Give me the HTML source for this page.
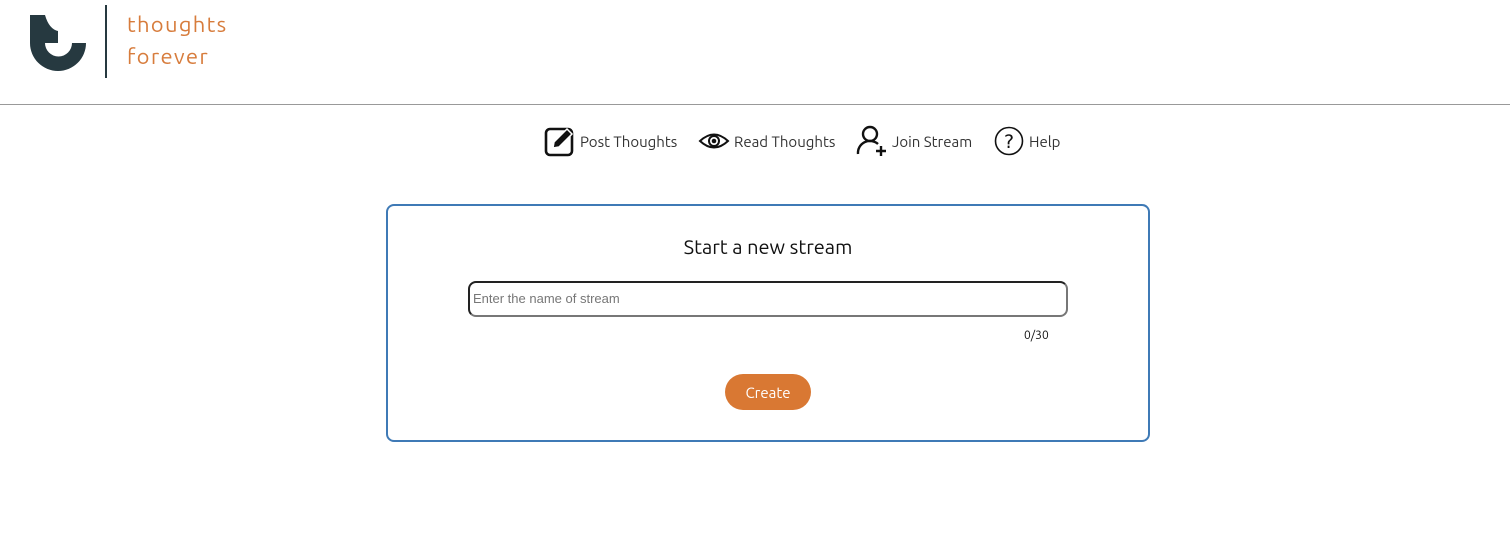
<!DOCTYPE html>
<html><head><style>
body{margin:0;width:1510px;height:545px;background:#fff;position:relative;font-family:"Ubuntu","DejaVu Sans","Liberation Sans",sans-serif;overflow:hidden}
.abs{position:absolute}
.nav{top:124px;height:34px;display:flex;align-items:center;font-size:15px;color:#333}
.nav span{margin-left:4px}
</style></head><body>
<svg class="abs" style="left:0;top:0" width="100" height="80" viewBox="0 0 100 80">
<path d="M30 15 H45 Q49 29 58 31 V43 H45 A13.5 13.5 0 0 0 72 43 H86 A28 28 0 0 1 30 43 Z" fill="#263940"/>
</svg>
<div class="abs" style="left:105px;top:5px;width:2px;height:73px;background:#263940"></div>
<div class="abs" style="left:127px;top:9px;font-family:'Ubuntu','DejaVu Sans',sans-serif;font-weight:400;font-size:22px;line-height:32px;color:#d77c3c;letter-spacing:1.3px">thoughts<br>forever</div>
<div class="abs" style="left:0;top:104px;width:1510px;height:1px;background:#999"></div>
<div class="abs nav" style="left:544px">
<svg width="32" height="32" viewBox="0 0 32 32"><rect x="2" y="4" width="26" height="26" rx="4" fill="none" stroke="#111" stroke-width="2.6"/><path d="M9 23 L10 17 L23 4 L28 9 L15 22 Z" fill="#111" stroke="#fff" stroke-width="1.5"/></svg>
<span>Post Thoughts</span></div>
<div class="abs nav" style="left:698px">
<svg width="32" height="32" viewBox="0 0 32 32"><path d="M2 16 Q16 3 30 16 Q16 29 2 16 Z" fill="none" stroke="#111" stroke-width="2"/><circle cx="16" cy="16" r="5" fill="none" stroke="#111" stroke-width="2"/><circle cx="16" cy="16" r="2.3" fill="#111"/></svg>
<span>Read Thoughts</span></div>
<div class="abs nav" style="left:856px">
<svg width="32" height="34" viewBox="0 0 32 34"><circle cx="14" cy="10" r="7" fill="none" stroke="#111" stroke-width="2.4"/><path d="M2 30 A12 12 0 0 1 22 20" fill="none" stroke="#111" stroke-width="2.4"/><path d="M25 22 V32 M20 27 H30" stroke="#111" stroke-width="2.4"/></svg>
<span>Join Stream</span></div>
<div class="abs nav" style="left:993px">
<svg width="32" height="32" viewBox="0 0 32 32"><circle cx="16" cy="16" r="13.5" fill="none" stroke="#111" stroke-width="1.6"/><text x="16" y="23" text-anchor="middle" font-size="19" font-family="DejaVu Sans" fill="#111">?</text></svg>
<span>Help</span></div>
<div class="abs" style="left:386px;top:204px;width:760px;height:234px;border:2px solid #3f7ab6;border-radius:8px"></div>
<div class="abs" style="left:386px;top:235px;width:764px;text-align:center;font-size:20px;color:#111">Start a new stream</div>
<div class="abs" style="left:468px;top:281px;width:596px;height:32px;border:2px solid;border-color:#222 #777 #777 #222;border-radius:8px;font-family:'Liberation Sans',sans-serif;font-size:13px;color:#777;line-height:32px;text-indent:3px">Enter the name of stream</div>
<div class="abs" style="left:1024px;top:329px;font-size:12px;color:#111">0/30</div>
<div class="abs" style="left:725px;top:374px;width:86px;height:36px;border-radius:18px;background:#d97833;color:#fff;font-size:15px;text-align:center;line-height:37px">Create</div>
</body></html>
